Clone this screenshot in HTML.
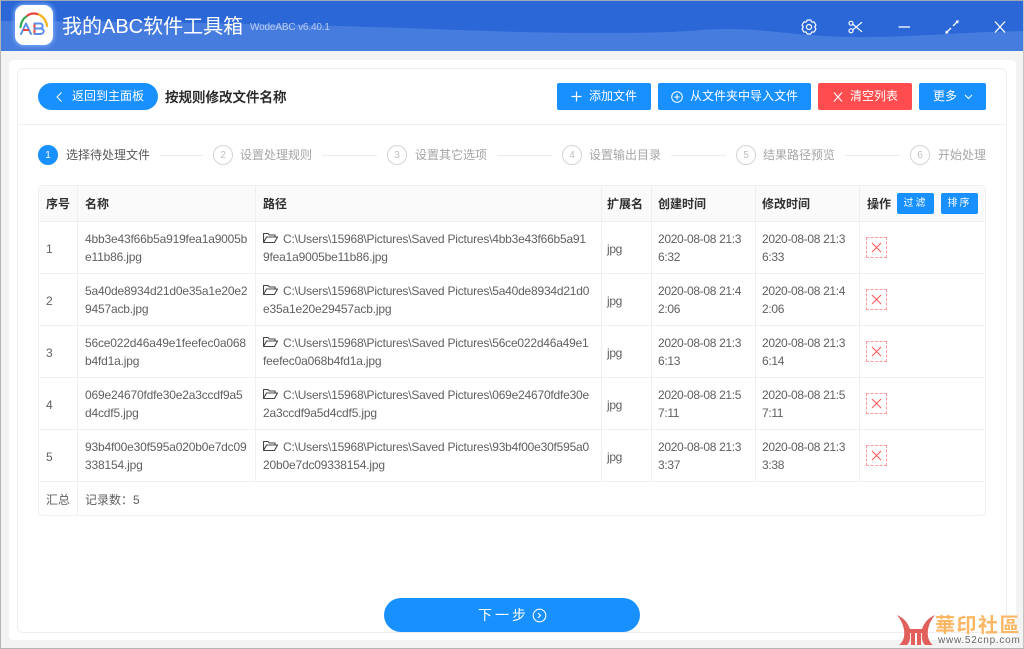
<!DOCTYPE html>
<html lang="zh"><head><meta charset="utf-8"><title>我的ABC软件工具箱</title>
<style>
html,body{margin:0;padding:0;width:1024px;height:649px;overflow:hidden;background:#f3f3f3}
*{box-sizing:border-box}
body{position:relative;font-family:"Liberation Sans","Noto Sans CJK SC",sans-serif;font-size:12px;color:#595959}
.a{position:absolute;white-space:nowrap}
.btn{position:absolute;top:83px;height:27px;background:#1890ff;color:#fff;border-radius:2px;line-height:27px;font-size:12px;white-space:nowrap}
.c{position:absolute;top:145px;width:20px;height:20px;border:1px solid #d4d4d4;border-radius:50%;color:#bfbfbf;text-align:center;line-height:19px;font-size:10px}
.st{position:absolute;top:147px;line-height:16px;color:#a6a6a6;font-size:12px;white-space:nowrap}
.ln{position:absolute;top:155px;height:1px;background:#ececec}
.h{position:absolute;top:196px;line-height:16px;font-weight:700;color:#303030;font-size:12px;white-space:nowrap}
.v{position:absolute;width:1px;background:#f0f0f0;top:186px;height:296px}
.r{position:absolute;left:39px;width:946px;height:1px;background:#f0f0f0}
.t{position:absolute;white-space:nowrap;line-height:16px;font-size:12px;color:#606060;letter-spacing:-.33px}
.n{letter-spacing:-.18px}
.p{letter-spacing:-.21px}
.d{position:absolute;left:866px;width:21px;height:21px;border:1px dashed #ff9a9c}
.fb{position:absolute;top:193px;height:21px;width:37px;background:#1890ff;color:#fff;border-radius:2px;text-align:center;line-height:21px;font-size:10px;letter-spacing:2px}
</style></head><body>

<svg class="a" style="left:0;top:0" width="1024" height="51" viewBox="0 0 1024 51">
<rect width="1024" height="51" fill="#2b67d6"/>
<path d="M0 21C100 21 200 23 300 25S500 33 600 33S690 29 730 29S800 37 860 37S960 32 1024 31V51H0Z" fill="#477cdf"/>
</svg>
<div class="a" style="left:0;top:0;width:1024px;height:1px;background:#9fa8b8"></div>
<div class="a" style="left:0;top:0;width:1px;height:649px;background:#b5b5b5"></div>
<div class="a" style="left:1023px;top:0;width:1px;height:649px;background:#c4c4c4"></div>
<div class="a" style="left:0;top:648px;width:1024px;height:1px;background:#b5b5b5"></div>

<div class="a" style="left:15px;top:5px;width:38px;height:40px;background:#fff;border-radius:9px;box-shadow:0 0 3px 2px rgba(120,170,245,.75)"></div>
<svg class="a" style="left:13px;top:4px" width="41" height="42" viewBox="0 0 41 42" fill="none">
<path d="M7.500 23C8 18 10 14.500 14 12" stroke="#2fa84f" stroke-width="2.200" stroke-linecap="round"/>
<path d="M14.500 11.500C18 9 22.500 9 25.500 10.500" stroke="#e8483f" stroke-width="2.200" stroke-linecap="round"/>
<path d="M26 10.500C30.500 13 33.500 17 34 22" stroke="#f2b61f" stroke-width="2.200" stroke-linecap="round"/>
<path d="M8 30L13 19.500L18 30" stroke="#5a8fee" stroke-width="2" stroke-linecap="round" stroke-linejoin="round"/>
<path d="M10 26H16" stroke="#e8483f" stroke-width="2"/>
<path d="M21.500 19.500V30" stroke="#e8483f" stroke-width="2" stroke-linecap="round"/>
<path d="M21.500 19.500H27C30.500 19.500 30.500 24.500 27 24.500H21.500M27 24.500C32 24.500 32 30 27 30H21.500" stroke="#5a8fee" stroke-width="2" stroke-linecap="round"/>
</svg>

<div class="a" style="left:62px;top:13px;font-size:20px;line-height:28px;color:#fff">我的ABC软件工具箱</div>
<div class="a" style="left:250px;top:21px;font-size:10px;line-height:14px;letter-spacing:-.15px;color:rgba(255,255,255,.62)">WodeABC v6.40.1</div>

<svg class="a" style="left:800px;top:18px" width="210" height="18" viewBox="0 0 210 18" fill="none" stroke="#fff" stroke-width="1.200">
<path d="M7.260 2.010L10.740 2.010L11.850 4.060L14.180 4L15.920 7.020L14.700 9L15.920 10.980L14.180 14L11.850 13.940L10.740 15.990L7.260 15.990L6.150 13.940L3.820 14L2.080 10.980L3.300 9L2.080 7.020L3.820 4L6.150 4.060Z" stroke-linejoin="round"/>
<circle cx="9" cy="9" r="2.500"/>
<circle cx="51" cy="5.200" r="2"/><circle cx="51" cy="12.800" r="2"/>
<path d="M52.800 6.200L62 13.800M52.800 11.800L62 4.200"/>
<path d="M98.500 9H110" stroke-width="1.300"/>
<path d="M146.500 14.500L151 10M153 8L157.500 3.500" stroke-width="1.300"/>
<path d="M145.500 15.500L146 12.700L148.300 15Z M158.500 2.500L155.700 3L158 5.300Z" fill="#fff" stroke-width=".5"/>
<path d="M195 3.500L205 14.500M205 3.500L195 14.500" stroke-width="1.300"/>
</svg>

<div class="a" style="left:9px;top:60px;width:1007px;height:580px;background:#fff;border-radius:4px"></div>
<div class="a" style="left:17px;top:68px;width:990px;height:565px;background:#fff;border:1px solid #eee;border-radius:6px"></div>
<div class="a" style="left:18px;top:124px;width:988px;height:1px;background:#efefef"></div>

<div class="btn" style="left:38px;width:120px;border-radius:14px"><svg class="a" style="left:18px;top:9px" width="7" height="10" fill="none" stroke="#fff"><path d="M5.500 .5L1 5L5.500 9.500"/></svg><span class="a" style="left:34px;top:0">返回到主面板</span></div>
<div class="a" style="left:165px;top:88px;font-size:13.500px;line-height:20px;font-weight:500;color:#262626;-webkit-text-stroke:.25px #262626">按规则修改文件名称</div>

<div class="btn" style="left:557px;width:94px"><svg class="a" style="left:14px;top:8px" width="11" height="11" stroke="#fff" stroke-width="1.200"><path d="M5.500 .5V10.500M.5 5.500H10.500"/></svg><span class="a" style="left:32px;top:0">添加文件</span></div>
<div class="btn" style="left:658px;width:153px"><svg class="a" style="left:13px;top:8px" width="12" height="12" fill="none" stroke="#fff"><circle cx="6" cy="6" r="5.300"/><path d="M6 3.300V8.700M3.300 6H8.700"/></svg><span class="a" style="left:32px;top:0">从文件夹中导入文件</span></div>
<div class="btn" style="left:818px;width:94px;background:#ff4d4f"><svg class="a" style="left:15px;top:9px" width="10" height="10" stroke="#fff" stroke-width="1.100"><path d="M1 .5L9 9.500M9 .5L1 9.500"/></svg><span class="a" style="left:32px;top:0">清空列表</span></div>
<div class="btn" style="left:919px;width:67px"><span class="a" style="left:14px;top:0">更多</span><svg class="a" style="left:45px;top:11px" width="9" height="6" fill="none" stroke="#fff"><path d="M1 1L4.500 4.500L8 1"/></svg></div>

<div class="c" style="left:38px;background:#1890ff;border-color:#1890ff;color:#fff">1</div>
<div class="st" style="left:66px;color:#595959">选择待处理文件</div>
<div class="ln" style="left:160px;width:43px"></div>
<div class="c" style="left:213px">2</div><div class="st" style="left:240px">设置处理规则</div>
<div class="ln" style="left:322px;width:55px"></div>
<div class="c" style="left:387px">3</div><div class="st" style="left:415px">设置其它选项</div>
<div class="ln" style="left:497px;width:55px"></div>
<div class="c" style="left:562px">4</div><div class="st" style="left:589px">设置输出目录</div>
<div class="ln" style="left:671px;width:55px"></div>
<div class="c" style="left:736px">5</div><div class="st" style="left:763px">结果路径预览</div>
<div class="ln" style="left:845px;width:55px"></div>
<div class="c" style="left:910px">6</div><div class="st" style="left:938px">开始处理</div>

<div class="a" style="left:38px;top:185px;width:948px;height:331px;border:1px solid #f0f0f0;border-radius:4px"></div>
<div class="a" style="left:39px;top:186px;width:946px;height:35px;background:#fafafa"></div>
<div class="r" style="top:221px"></div><div class="r" style="top:273px"></div><div class="r" style="top:325px"></div><div class="r" style="top:377px"></div><div class="r" style="top:429px"></div><div class="r" style="top:481px"></div>
<div class="v" style="left:77px;height:329px"></div><div class="v" style="left:255px"></div><div class="v" style="left:601px"></div><div class="v" style="left:651px"></div><div class="v" style="left:755px"></div><div class="v" style="left:859px"></div>

<div class="h" style="left:46px">序号</div><div class="h" style="left:85px">名称</div><div class="h" style="left:263px">路径</div><div class="h" style="left:607px">扩展名</div><div class="h" style="left:658px">创建时间</div><div class="h" style="left:762px">修改时间</div><div class="h" style="left:867px">操作</div>
<div class="fb" style="left:897px">过滤</div><div class="fb" style="left:941px">排序</div>

<div class="t" style="left:46px;top:241px">1</div>
<div class="t n" style="left:85px;top:231px">4bb3e43f66b5a919fea1a9005b</div><div class="t n" style="left:85px;top:249px">e11b86.jpg</div>
<div class="t p" style="left:283px;top:231px">C:\Users\15968\Pictures\Saved Pictures\4bb3e43f66b5a91</div><div class="t n" style="left:263px;top:249px">9fea1a9005be11b86.jpg</div>
<div class="t" style="left:607px;top:241px">jpg</div>
<div class="t" style="left:658px;top:231px">2020-08-08 21:3</div><div class="t" style="left:658px;top:249px">6:32</div>
<div class="t" style="left:762px;top:231px">2020-08-08 21:3</div><div class="t" style="left:762px;top:249px">6:33</div>

<div class="t" style="left:46px;top:293px">2</div>
<div class="t n" style="left:85px;top:283px">5a40de8934d21d0e35a1e20e2</div><div class="t n" style="left:85px;top:301px">9457acb.jpg</div>
<div class="t p" style="left:283px;top:283px">C:\Users\15968\Pictures\Saved Pictures\5a40de8934d21d0</div><div class="t n" style="left:263px;top:301px">e35a1e20e29457acb.jpg</div>
<div class="t" style="left:607px;top:293px">jpg</div>
<div class="t" style="left:658px;top:283px">2020-08-08 21:4</div><div class="t" style="left:658px;top:301px">2:06</div>
<div class="t" style="left:762px;top:283px">2020-08-08 21:4</div><div class="t" style="left:762px;top:301px">2:06</div>

<div class="t" style="left:46px;top:345px">3</div>
<div class="t n" style="left:85px;top:335px">56ce022d46a49e1feefec0a068</div><div class="t n" style="left:85px;top:353px">b4fd1a.jpg</div>
<div class="t p" style="left:283px;top:335px">C:\Users\15968\Pictures\Saved Pictures\56ce022d46a49e1</div><div class="t n" style="left:263px;top:353px">feefec0a068b4fd1a.jpg</div>
<div class="t" style="left:607px;top:345px">jpg</div>
<div class="t" style="left:658px;top:335px">2020-08-08 21:3</div><div class="t" style="left:658px;top:353px">6:13</div>
<div class="t" style="left:762px;top:335px">2020-08-08 21:3</div><div class="t" style="left:762px;top:353px">6:14</div>

<div class="t" style="left:46px;top:397px">4</div>
<div class="t n" style="left:85px;top:387px">069e24670fdfe30e2a3ccdf9a5</div><div class="t n" style="left:85px;top:405px">d4cdf5.jpg</div>
<div class="t p" style="left:283px;top:387px">C:\Users\15968\Pictures\Saved Pictures\069e24670fdfe30e</div><div class="t n" style="left:263px;top:405px">2a3ccdf9a5d4cdf5.jpg</div>
<div class="t" style="left:607px;top:397px">jpg</div>
<div class="t" style="left:658px;top:387px">2020-08-08 21:5</div><div class="t" style="left:658px;top:405px">7:11</div>
<div class="t" style="left:762px;top:387px">2020-08-08 21:5</div><div class="t" style="left:762px;top:405px">7:11</div>

<div class="t" style="left:46px;top:449px">5</div>
<div class="t n" style="left:85px;top:439px">93b4f00e30f595a020b0e7dc09</div><div class="t n" style="left:85px;top:457px">338154.jpg</div>
<div class="t p" style="left:283px;top:439px">C:\Users\15968\Pictures\Saved Pictures\93b4f00e30f595a0</div><div class="t n" style="left:263px;top:457px">20b0e7dc09338154.jpg</div>
<div class="t" style="left:607px;top:449px">jpg</div>
<div class="t" style="left:658px;top:439px">2020-08-08 21:3</div><div class="t" style="left:658px;top:457px">3:37</div>
<div class="t" style="left:762px;top:439px">2020-08-08 21:3</div><div class="t" style="left:762px;top:457px">3:38</div>

<svg class="a" style="left:263px;top:230px" width="16" height="240" viewBox="0 0 16 240" fill="none" stroke="#444" stroke-width="1.100" stroke-linejoin="round">
<path d="M.5 12.500V3.500H5L6.500 5H12V7M.5 12.500H11.500L14.500 7H3.500Z"/>
<path d="M.5 64.500V55.500H5L6.500 57H12V59M.5 64.500H11.500L14.500 59H3.500Z"/>
<path d="M.5 116.500V107.500H5L6.500 109H12V111M.5 116.500H11.500L14.500 111H3.500Z"/>
<path d="M.5 168.500V159.500H5L6.500 161H12V163M.5 168.500H11.500L14.500 163H3.500Z"/>
<path d="M.5 220.500V211.500H5L6.500 213H12V215M.5 220.500H11.500L14.500 215H3.500Z"/>
</svg>

<div class="d" style="top:237px"></div><div class="d" style="top:289px"></div><div class="d" style="top:341px"></div><div class="d" style="top:393px"></div><div class="d" style="top:445px"></div>
<svg class="a" style="left:866px;top:237px" width="21" height="230" fill="none" stroke="#ff5a5c" stroke-width="1.100">
<path d="M6 6L15 15M15 6L6 15M6 58L15 67M15 58L6 67M6 110L15 119M15 110L6 119M6 162L15 171M15 162L6 171M6 214L15 223M15 214L6 223"/>
</svg>

<div class="t" style="left:46px;top:492px;letter-spacing:0">汇总</div>
<div class="t" style="left:85px;top:492px;letter-spacing:0">记录数：5</div>

<div class="a" style="left:384px;top:598px;width:256px;height:34px;background:#1890ff;border-radius:17px"></div>
<div class="a" style="left:478px;top:606px;font-size:14px;line-height:18px;color:#fff;letter-spacing:3px">下一步</div>
<svg class="a" style="left:532px;top:608px" width="15" height="15" fill="none" stroke="#fff" stroke-width="1.100"><circle cx="7.500" cy="7.500" r="6.300"/><path d="M6 5L8.500 7.500L6 10"/></svg>

<svg class="a" style="left:896px;top:612px" width="40" height="36" viewBox="0 0 40 36" fill="#e2605c">
<path d="M1 3C8 6 12 11 14 17H26C28 11 32 6 39 3C35 8 33 12 32 18C31 25 33 30 37 33L29 33C26 30 25.500 26 26 21H25V33H21V21H19V33H15V21H14C14.500 26 14 30 11 33L3 33C7 30 9 25 8 18C7 12 5 8 1 3Z"/>
</svg>
<div class="a" style="left:935px;top:610px;font-family:'Noto Sans CJK TC',sans-serif;font-weight:700;font-size:20px;line-height:28px;color:#fcb765;letter-spacing:1.500px;text-shadow:0 0 2px #fff">華印社區</div>
<div class="a" style="left:938px;top:634px;font-size:10px;line-height:13px;color:#666;letter-spacing:.75px;text-shadow:0 0 2px #fff">www.52cnp.com</div>

</body></html>
